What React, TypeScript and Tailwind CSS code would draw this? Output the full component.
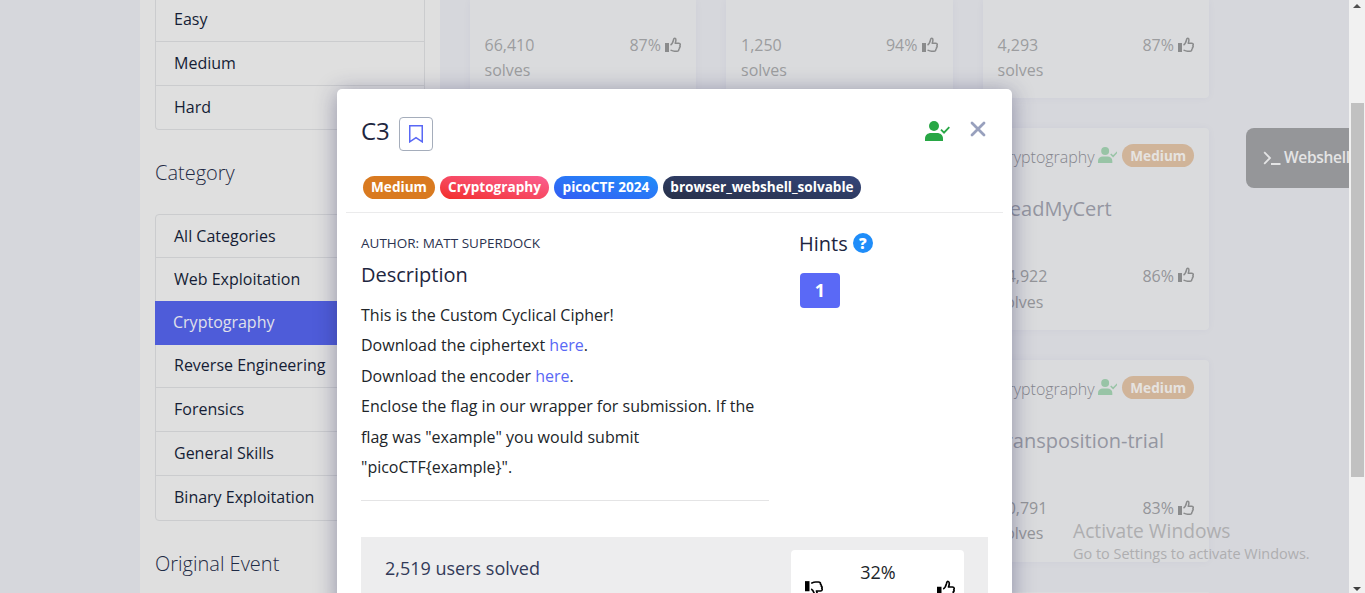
import type { ReactNode } from 'react';

type IconProps = { className?: string };

function ThumbUp({ className }: IconProps) {
  return (
    <svg viewBox="0 0 16 16" className={className} fill="none">
      <path d="M0 6h4v9H0z" fill="currentColor" />
      <path
        d="M5.500 8C7.400 7.100 8 5 8.500 3 8.700 1.600 9.300 1.100 10 1.300c1.300.3 1.100 2.600.2 4.900h3.600c1.800.2 1.700 1.700 1.100 2.400.4.700.1 1.600-.4 1.900.2.900-.2 1.500-.7 1.800.1 1.300-.6 1.900-1.800 1.900H9.500c-1.500 0-2.600-.5-4-1.100"
        stroke="currentColor"
        strokeWidth="1.500"
        strokeLinejoin="round"
      />
    </svg>
  );
}

function UserCheck({ className }: IconProps) {
  return (
    <svg viewBox="0 0 25 20" className={className}>
      <circle cx="9" cy="5" r="5" fill="currentColor" />
      <path d="M0 20v-2.500C0 14.200 2.700 12 6 12h6c3.300 0 6 2.200 6 5.500V20z" fill="currentColor" />
      <path d="M16 8.700l3 3 5.300-5.600" fill="none" stroke="currentColor" strokeWidth="1.800" />
    </svg>
  );
}

function Row({ label, className }: { label: string; className: string }) {
  return <div className={`flex items-center px-[18px] text-base text-[#151d35] ${className}`}>{label}</div>;
}

function Solves({ count, rate, tone }: { count: string; rate: string; tone: string }) {
  return (
    <div className={`flex items-start justify-between ${tone}`}>
      <div>
        {count}
        <br />
        solves
      </div>
      <div className="flex items-start gap-1">
        {rate}
        <ThumbUp className="mt-1 size-4 text-[#8a8b8c]" />
      </div>
    </div>
  );
}

function TopCard({ count, rate }: { count: string; rate: string }) {
  return (
    <div className="h-[98px] w-[226.500px] shrink-0 rounded-b bg-[#dadbdd] px-[15px] pt-8 shadow-[0_0_8px_rgba(60,60,120,0.04)]">
      <Solves count={count} rate={rate} tone="leading-[25px] pt-px text-[#9c9d9f]" />
    </div>
  );
}

type ChallengeProps = { name: string; count: string; rate: string; solvesTone: string };

function ChallengeCard({ name, count, rate, solvesTone }: ChallengeProps) {
  return (
    <div className="h-[202px] w-[226.500px] shrink-0 rounded bg-[#dadbdd] px-[15px] pt-4 shadow-[0_0_8px_rgba(60,60,120,0.04)]">
      <div className="flex h-[23px] items-center justify-end gap-1">
        <span className="pt-0.5 font-light text-[#85868d]">Cryptography</span>
        <UserCheck className="-mt-0.5 -ml-px mr-px h-4 w-5 text-[#98c4a6]" />
        <span className="flex h-[23px] w-[72px] items-center justify-center rounded-full bg-[#d0b499] text-[13.600px] font-bold text-[#e6e3e0]">
          Medium
        </span>
      </div>
      <div className="mt-[28px] h-[28px] text-xl leading-7 whitespace-nowrap text-[#9496a1]">{name}</div>
      <div className="mt-10">
        <Solves count={count} rate={rate} tone={solvesTone} />
      </div>
    </div>
  );
}

function Pill({ className, children }: { className: string; children: ReactNode }) {
  return (
    <span
      className={`flex h-[23px] items-center justify-center rounded-full pb-px text-[13.600px] leading-none font-bold whitespace-nowrap text-white ${className}`}
    >
      {children}
    </span>
  );
}

function Sidebar() {
  return (
    <aside className="ml-[140px] h-[593px] w-[300px] shrink-0 bg-[#dfdfdf] px-[15px]">
      <div className="w-[270px] rounded-b border border-t-0 border-[#cbccce]">
        <Row label="Easy" className="h-[42px] border-b border-[#cbccce] pb-1" />
        <Row label="Medium" className="h-[44px] border-b border-[#cbccce] pb-0.5" />
        <Row label="Hard" className="h-[43px] pb-0.5" />
      </div>
      <h2 className="mt-[29px] h-7 text-xl leading-7 font-light text-[#1f2b45]">Category</h2>
      <div className="mt-[27px] w-[270px] rounded border border-[#cbccce]">
        <Row label="All Categories" className="h-[43px] border-b border-[#cbccce]" />
        <Row label="Web Exploitation" className="h-[43px] pb-0.5" />
        <div className="-mx-px flex h-[44px] items-center bg-[#4e5cd9] px-[18px] pb-0.5 text-[#e0e1ea]">Cryptography</div>
        <Row label="Reverse Engineering" className="h-[43px] border-b border-[#cbccce] pb-0.5" />
        <Row label="Forensics" className="h-[44px] border-b border-[#cbccce] pb-0.5" />
        <Row label="General Skills" className="h-[44px] border-b border-[#cbccce] pb-0.5" />
        <Row label="Binary Exploitation" className="h-[44px] pb-0.5" />
      </div>
      <h2 className="mt-[29px] h-7 text-xl leading-7 font-light text-[#1f2b45]">Original Event</h2>
    </aside>
  );
}

function Modal() {
  return (
    <div className="absolute top-[89px] left-[337px] h-[520px] w-[675px] rounded-[5px] bg-white px-6 shadow-[0_3px_22px_rgba(35,35,85,0.42)]">
      <div className="flex h-[87px] items-start justify-between pt-7">
        <div className="flex items-start gap-[9px]">
          <h1 className="h-8 text-2xl leading-7 text-[#1e2640]">C3</h1>
          <span className="flex size-[34px] items-center justify-center rounded border border-[#a5adbb]">
            <svg viewBox="0 0 14 18" className="h-[18px] w-[14px]" fill="none">
              <path d="M.7.700h12.600v16.100L7 12.600.7 16.800z" stroke="#5968f5" strokeWidth="1.600" />
            </svg>
          </span>
        </div>
        <div className="flex items-start gap-5 pt-1">
          <UserCheck className="h-5 w-[25px] text-[#28a745]" />
          <svg viewBox="0 0 16 16" className="mr-0.5 size-4" fill="none">
            <path d="M2 2l12 12M14 2L2 14" stroke="#98a0bd" strokeWidth="2.800" strokeLinecap="round" />
          </svg>
        </div>
      </div>
      <div className="-mx-[15px] flex h-[37px] gap-[5px] border-b border-[#ebebec] pl-[17px]">
        <Pill className="w-[72px] bg-[#d97a20]">Medium</Pill>
        <Pill className="w-[109px] bg-gradient-to-tr from-[#f22b23] to-[#fb5e91]">Cryptography</Pill>
        <Pill className="w-[104px] bg-gradient-to-tr from-[#335cf3] to-[#1f8df9]">picoCTF 2024</Pill>
        <Pill className="w-[198px] bg-gradient-to-tr from-[#283149] to-[#34457a]">browser_webshell_solvable</Pill>
      </div>
      <div className="flex">
        <div className="w-[408px] border-b border-[#e4e4e5] pt-[21px] pb-[18px]">
          <div className="h-[18px] text-[13.500px] leading-[19px] text-[#2b3350]">AUTHOR: MATT SUPERDOCK</div>
          <h3 className="mt-[9px] mb-[11px] text-xl leading-7 text-[#1e2640]">Description</h3>
          <div className="text-base leading-[30.400px] text-[#212529]">
            <p>This is the Custom Cyclical Cipher!</p>
            <p>
              Download the ciphertext <span className="text-[#5968f5]">here</span>.
            </p>
            <p>
              Download the encoder <span className="text-[#5968f5]">here</span>.
            </p>
            <p>{'Enclose the flag in our wrapper for submission. If the flag was "example" you would submit "picoCTF{example}".'}</p>
          </div>
        </div>
        <div className="ml-[30px] pt-[17px]">
          <div className="flex h-7 items-center gap-[5px] text-xl leading-7 text-[#1e2640]">
            Hints
            <span className="-mt-0.5 flex size-5 items-center justify-center rounded-full bg-[#1f8df9] text-[15px] leading-none font-extrabold text-white">
              ?
            </span>
          </div>
          <div className="mt-[15px] ml-px flex h-[35px] w-10 items-center justify-center rounded bg-[#5a69f6] pb-px text-lg font-bold text-white">
            1
          </div>
        </div>
      </div>
      <div className="mt-9 flex h-[72px] w-[627px] justify-between bg-[#ededee] pt-[13px] pr-6 pl-6">
        <div className="pt-1 text-lg leading-7 text-[#323a58]">2,519 users solved</div>
        <div className="flex w-[173px] justify-between rounded-t bg-white pt-[30px] pr-2 pl-[14px] text-black">
          <ThumbUp className="size-[18px] -scale-y-100" />
          <span className="-mt-[22px] -ml-1 text-lg leading-7 text-[#212529]">32%</span>
          <ThumbUp className="mr-px size-[18px]" />
        </div>
      </div>
    </div>
  );
}

export default function App() {
  return (
    <div className="relative flex h-[593px] w-[1365px] overflow-hidden bg-[#d6d7dc] font-['Open_Sans',sans-serif] text-base leading-6">
      <Sidebar />
      <main className="ml-[29.500px] flex flex-1 gap-[30px]">
        <TopCard count="66,410" rate="87%" />
        <TopCard count="1,250" rate="94%" />
        <div className="flex flex-col gap-[30px]">
          <TopCard count="4,293" rate="87%" />
          <ChallengeCard name="ReadMyCert" count="14,922" rate="86%" solvesTone="leading-[26px] text-[#949599]" />
          <ChallengeCard
            name="transposition-trial"
            count="10,791"
            rate="83%"
            solvesTone="leading-[25px] pt-px text-[#949599]"
          />
          <div className="h-10 w-[226.500px] rounded bg-[#dadbdd]" />
        </div>
      </main>
      <div className="mt-32 flex h-[60px] w-[103px] shrink-0 items-center gap-[3px] rounded-l-lg bg-[#959699] pl-[17px] text-[15.500px] font-semibold text-[#e4e4e5]">
        <svg viewBox="0 0 18 14" className="h-[14px] w-[18px] shrink-0" fill="none" stroke="currentColor" strokeWidth="1.800">
          <path d="M1.200 1.200L7 7l-5.800 5.800M8 13h9.500" />
        </svg>
        <span className="pb-0.5 tracking-[-0.300px]">Webshell</span>
      </div>
      <div className="flex w-4 shrink-0 flex-col items-center justify-between bg-[#f1f1f1]">
        <svg viewBox="0 0 16 12" className="h-3 w-4">
          <path d="M8 4l4 4H4z" fill="#505050" />
        </svg>
        <div className="mt-[91px] ml-px h-[374px] w-[13px] bg-[#c1c1c1]" />
        <svg viewBox="0 0 16 12" className="mt-auto h-3 w-4">
          <path d="M8 10l4-4H4z" fill="#404040" />
        </svg>
      </div>
      <Modal />
      <div className="absolute top-[518px] left-[1073px] whitespace-nowrap text-[#aeaeb0]">
        <div className="text-[19.200px] leading-[26px]">Activate Windows</div>
        <div className="pt-px text-[14.450px] leading-[18px]">Go to Settings to activate Windows.</div>
      </div>
    </div>
  );
}
